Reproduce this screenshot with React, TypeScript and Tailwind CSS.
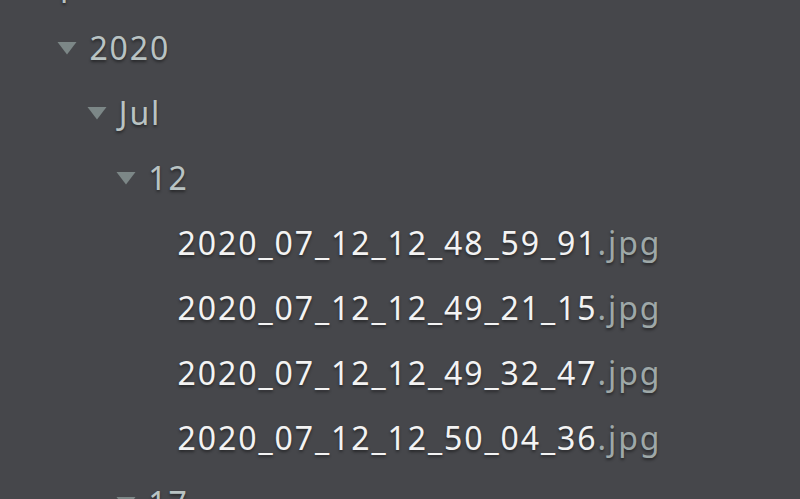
import React from 'react';

type Node = { label: string; ext?: string; depth: number; folder?: boolean };

const rows: Node[] = [
  { label: 'photo', depth: 0, folder: true },
  { label: '2020', depth: 1, folder: true },
  { label: 'Jul', depth: 2, folder: true },
  { label: '12', depth: 3, folder: true },
  { label: '2020_07_12_12_48_59_91', ext: '.jpg', depth: 4 },
  { label: '2020_07_12_12_49_21_15', ext: '.jpg', depth: 4 },
  { label: '2020_07_12_12_49_32_47', ext: '.jpg', depth: 4 },
  { label: '2020_07_12_12_50_04_36', ext: '.jpg', depth: 4 },
  { label: '17', depth: 3, folder: true },
];

const Caret = () => (
  <svg width="20" height="14" viewBox="0 0 20 14" className="shrink-0">
    <path d="M0.5 1 L19.5 1 L10 13.5 Z" fill="#7c8787" />
  </svg>
);

const App: React.FC = () => {
  return (
    <div className="w-[800px] h-[499px] overflow-hidden bg-[#46474b] font-['Noto_Sans',sans-serif] [text-shadow:0_2px_3px_rgba(0,0,0,0.45)]">
      <div className="-mt-[50px] flex flex-col">
        {rows.map((r, i) => (
          <div
            key={i}
            className="h-[65px] flex items-center gap-[12px] text-[32px] leading-none tracking-[1.9px]"
            style={{ paddingLeft: 28 + r.depth * 29.4 }}
          >
            {r.folder ? <Caret /> : <span className="w-[20px] shrink-0" />}
            {r.folder ? (
              <span className="text-[#b9c3c3]">{r.label}</span>
            ) : (
              <span className="text-[#f3f3f3]">
                {r.label}
                <span className="text-[#9ea8a8]">{r.ext}</span>
              </span>
            )}
          </div>
        ))}
      </div>
    </div>
  );
};

export default App;
